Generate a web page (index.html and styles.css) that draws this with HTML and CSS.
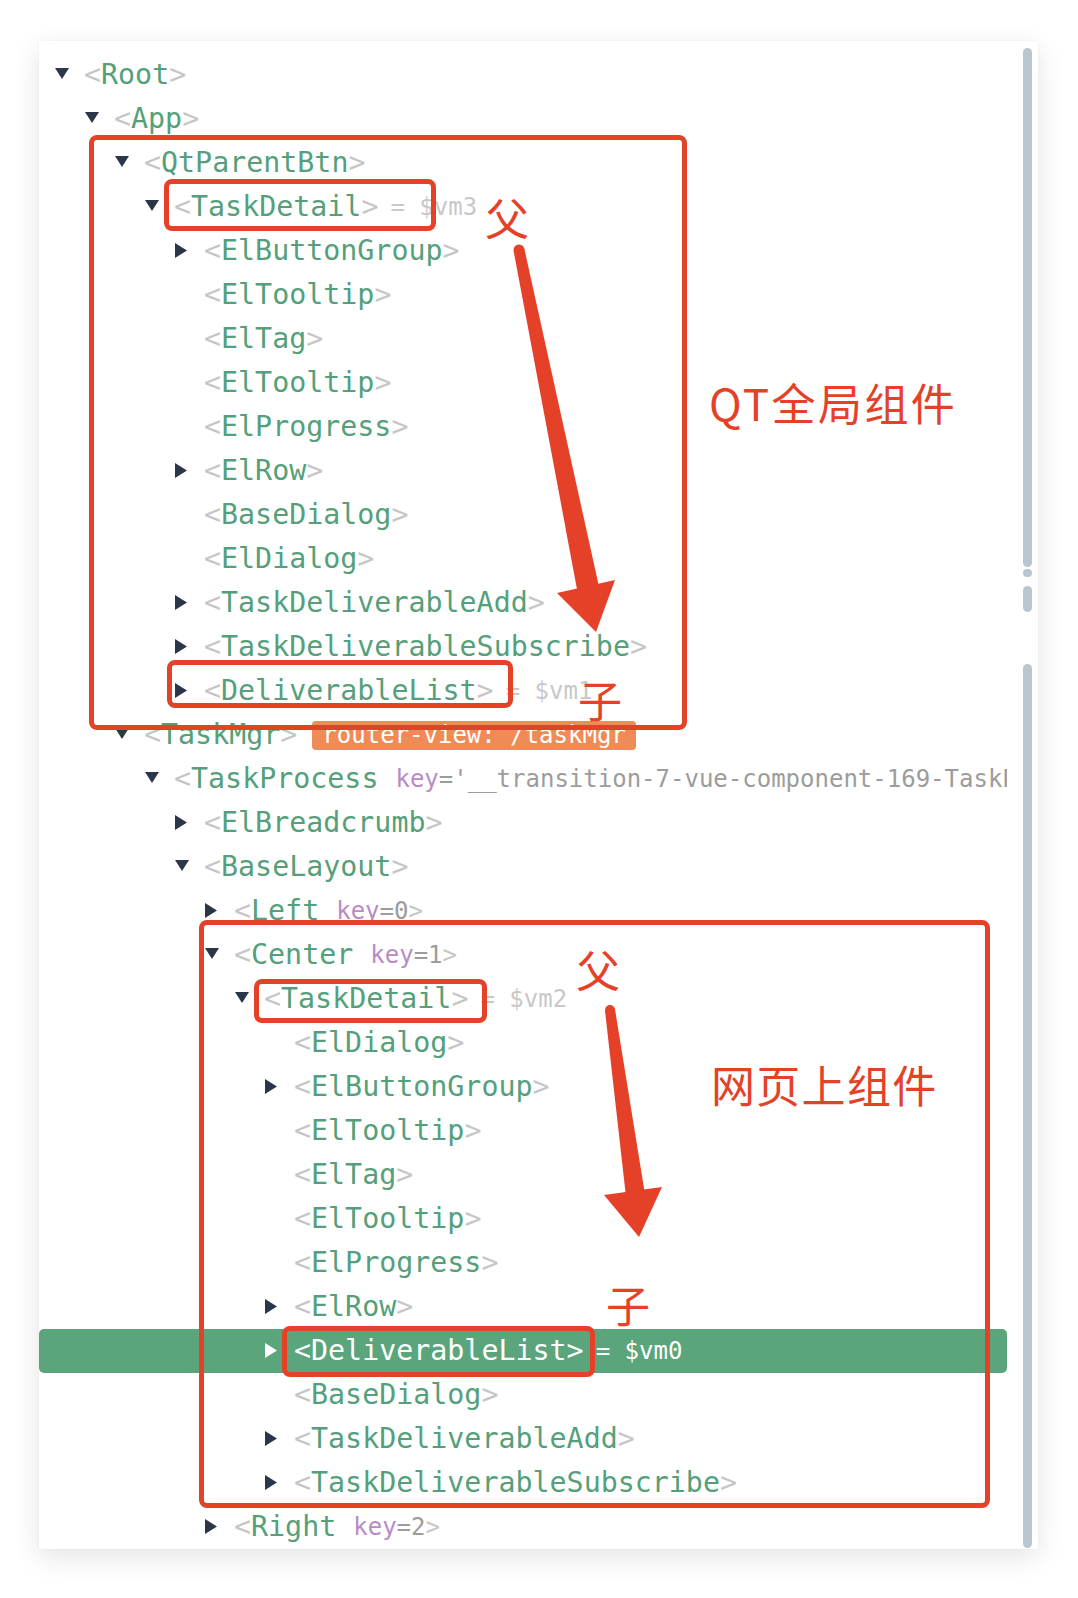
FILE: index.html
```html
<!DOCTYPE html>
<html>
<head>
<meta charset="utf-8">
<link rel="stylesheet" href="styles.css">
</head>
<body>
<div class="page">
  <div class="card">
    <div class="tree">
      <div class="row d0"><span class="tog"><svg class="dn" width="14" height="11"><polygon points="0,0 14,0 7,11"/></svg></span><span class="br">&lt;</span><span class="nm">Root</span><span class="br">&gt;</span></div>
      <div class="row d1"><span class="tog"><svg class="dn" width="14" height="11"><polygon points="0,0 14,0 7,11"/></svg></span><span class="br">&lt;</span><span class="nm">App</span><span class="br">&gt;</span></div>
      <div class="row d2"><span class="tog"><svg class="dn" width="14" height="11"><polygon points="0,0 14,0 7,11"/></svg></span><span class="br">&lt;</span><span class="nm">QtParentBtn</span><span class="br">&gt;</span></div>
      <div class="row d3"><span class="tog"><svg class="dn" width="14" height="11"><polygon points="0,0 14,0 7,11"/></svg></span><span class="br">&lt;</span><span class="nm">TaskDetail</span><span class="br">&gt;</span><span class="vm">= $vm3</span></div>
      <div class="row d4"><span class="tog"><svg class="rt" width="12" height="15"><polygon points="0,0 12,7.5 0,15"/></svg></span><span class="br">&lt;</span><span class="nm">ElButtonGroup</span><span class="br">&gt;</span></div>
      <div class="row d4"><span class="tog"></span><span class="br">&lt;</span><span class="nm">ElTooltip</span><span class="br">&gt;</span></div>
      <div class="row d4"><span class="tog"></span><span class="br">&lt;</span><span class="nm">ElTag</span><span class="br">&gt;</span></div>
      <div class="row d4"><span class="tog"></span><span class="br">&lt;</span><span class="nm">ElTooltip</span><span class="br">&gt;</span></div>
      <div class="row d4"><span class="tog"></span><span class="br">&lt;</span><span class="nm">ElProgress</span><span class="br">&gt;</span></div>
      <div class="row d4"><span class="tog"><svg class="rt" width="12" height="15"><polygon points="0,0 12,7.5 0,15"/></svg></span><span class="br">&lt;</span><span class="nm">ElRow</span><span class="br">&gt;</span></div>
      <div class="row d4"><span class="tog"></span><span class="br">&lt;</span><span class="nm">BaseDialog</span><span class="br">&gt;</span></div>
      <div class="row d4"><span class="tog"></span><span class="br">&lt;</span><span class="nm">ElDialog</span><span class="br">&gt;</span></div>
      <div class="row d4"><span class="tog"><svg class="rt" width="12" height="15"><polygon points="0,0 12,7.5 0,15"/></svg></span><span class="br">&lt;</span><span class="nm">TaskDeliverableAdd</span><span class="br">&gt;</span></div>
      <div class="row d4"><span class="tog"><svg class="rt" width="12" height="15"><polygon points="0,0 12,7.5 0,15"/></svg></span><span class="br">&lt;</span><span class="nm">TaskDeliverableSubscribe</span><span class="br">&gt;</span></div>
      <div class="row d4"><span class="tog"><svg class="rt" width="12" height="15"><polygon points="0,0 12,7.5 0,15"/></svg></span><span class="br">&lt;</span><span class="nm">DeliverableList</span><span class="br">&gt;</span><span class="vm">= $vm1</span></div>
      <div class="row d2"><span class="tog"><svg class="dn" width="14" height="11"><polygon points="0,0 14,0 7,11"/></svg></span><span class="br">&lt;</span><span class="nm">TaskMgr</span><span class="br">&gt;</span><span class="badge">router-view: /taskMgr</span></div>
      <div class="row d3"><span class="tog"><svg class="dn" width="14" height="11"><polygon points="0,0 14,0 7,11"/></svg></span><span class="br">&lt;</span><span class="nm">TaskProcess</span><span class="attr"><span class="ak">key</span><span class="av">='__transition-7-vue-component-169-TaskProcess'</span><span class="br">&gt;</span></span></div>
      <div class="row d4"><span class="tog"><svg class="rt" width="12" height="15"><polygon points="0,0 12,7.5 0,15"/></svg></span><span class="br">&lt;</span><span class="nm">ElBreadcrumb</span><span class="br">&gt;</span></div>
      <div class="row d4"><span class="tog"><svg class="dn" width="14" height="11"><polygon points="0,0 14,0 7,11"/></svg></span><span class="br">&lt;</span><span class="nm">BaseLayout</span><span class="br">&gt;</span></div>
      <div class="row d5"><span class="tog"><svg class="rt" width="12" height="15"><polygon points="0,0 12,7.5 0,15"/></svg></span><span class="br">&lt;</span><span class="nm">Left</span><span class="attr"><span class="ak">key</span><span class="av">=0</span><span class="br">&gt;</span></span></div>
      <div class="row d5"><span class="tog"><svg class="dn" width="14" height="11"><polygon points="0,0 14,0 7,11"/></svg></span><span class="br">&lt;</span><span class="nm">Center</span><span class="attr"><span class="ak">key</span><span class="av">=1</span><span class="br">&gt;</span></span></div>
      <div class="row d6"><span class="tog"><svg class="dn" width="14" height="11"><polygon points="0,0 14,0 7,11"/></svg></span><span class="br">&lt;</span><span class="nm">TaskDetail</span><span class="br">&gt;</span><span class="vm">= $vm2</span></div>
      <div class="row d7"><span class="tog"></span><span class="br">&lt;</span><span class="nm">ElDialog</span><span class="br">&gt;</span></div>
      <div class="row d7"><span class="tog"><svg class="rt" width="12" height="15"><polygon points="0,0 12,7.5 0,15"/></svg></span><span class="br">&lt;</span><span class="nm">ElButtonGroup</span><span class="br">&gt;</span></div>
      <div class="row d7"><span class="tog"></span><span class="br">&lt;</span><span class="nm">ElTooltip</span><span class="br">&gt;</span></div>
      <div class="row d7"><span class="tog"></span><span class="br">&lt;</span><span class="nm">ElTag</span><span class="br">&gt;</span></div>
      <div class="row d7"><span class="tog"></span><span class="br">&lt;</span><span class="nm">ElTooltip</span><span class="br">&gt;</span></div>
      <div class="row d7"><span class="tog"></span><span class="br">&lt;</span><span class="nm">ElProgress</span><span class="br">&gt;</span></div>
      <div class="row d7"><span class="tog"><svg class="rt" width="12" height="15"><polygon points="0,0 12,7.5 0,15"/></svg></span><span class="br">&lt;</span><span class="nm">ElRow</span><span class="br">&gt;</span></div>
      <div class="row d7 sel"><span class="tog"><svg class="rt" width="12" height="15"><polygon points="0,0 12,7.5 0,15"/></svg></span><span class="br">&lt;</span><span class="nm">DeliverableList</span><span class="br">&gt;</span><span class="vm">= $vm0</span></div>
      <div class="row d7"><span class="tog"></span><span class="br">&lt;</span><span class="nm">BaseDialog</span><span class="br">&gt;</span></div>
      <div class="row d7"><span class="tog"><svg class="rt" width="12" height="15"><polygon points="0,0 12,7.5 0,15"/></svg></span><span class="br">&lt;</span><span class="nm">TaskDeliverableAdd</span><span class="br">&gt;</span></div>
      <div class="row d7"><span class="tog"><svg class="rt" width="12" height="15"><polygon points="0,0 12,7.5 0,15"/></svg></span><span class="br">&lt;</span><span class="nm">TaskDeliverableSubscribe</span><span class="br">&gt;</span></div>
      <div class="row d5"><span class="tog"><svg class="rt" width="12" height="15"><polygon points="0,0 12,7.5 0,15"/></svg></span><span class="br">&lt;</span><span class="nm">Right</span><span class="attr"><span class="ak">key</span><span class="av">=2</span><span class="br">&gt;</span></span></div>
    </div>
    <div class="gutter">
      <div class="thumb t1"></div>
      <div class="thumb t1b"></div>
      <div class="thumb t2"></div>
      <div class="thumb t3"></div>
    </div>
  </div>

  <div class="box b1"></div>
  <div class="box b2"></div>
  <div class="box b3"></div>
  <div class="box b4"></div>
  <div class="box b5"></div>
  <div class="box b6"></div>

  <div class="note n-fu1">父</div>
  <div class="note n-zi1">子</div>
  <div class="note n-qt">QT全局组件</div>
  <div class="note n-fu2">父</div>
  <div class="note n-web">网页上组件</div>
  <div class="note n-zi2">子</div>

  <svg class="arrows" width="1078" height="1598" viewBox="0 0 1078 1598">
    <circle cx="519" cy="250" r="5.5"/>
    <polygon points="513.6,251 524.4,249 598.8,585.8 577.2,590.2"/>
    <polygon points="557,593 615,580 596,632"/>
    <circle cx="610" cy="1010" r="5"/>
    <polygon points="605,1010.7 615,1009.3 644.4,1190.7 625.6,1193.3"/>
    <polygon points="604,1195 662,1187 639,1237"/>
  </svg>
</div>
</body>
</html>
```

FILE: styles.css
```css
html, body {
  margin: 0;
  padding: 0;
  background: #ffffff;
}

.page {
  position: relative;
  width: 1078px;
  height: 1598px;
  overflow: hidden;
  padding-top: 41px;
  box-sizing: border-box;
}

.card {
  margin-left: 39px;
  width: 999px;
  background: #ffffff;
  display: flex;
  box-shadow: 0 0 2px rgba(0, 0, 0, 0.06), 0 8px 26px rgba(0, 0, 0, 0.11);
}

.tree {
  width: 968px;
  padding-top: 12px;
  overflow: hidden;
  font-family: "DejaVu Sans Mono", "Liberation Mono", monospace;
  font-size: 28.3px;
  white-space: nowrap;
}

.row {
  height: 44px;
  line-height: 44px;
  display: flex;
  align-items: center;
  box-sizing: border-box;
  border-radius: 5px;
}

.d0 { padding-left: 16px; }
.d1 { padding-left: 46px; }
.d2 { padding-left: 76px; }
.d3 { padding-left: 106px; }
.d4 { padding-left: 136px; }
.d5 { padding-left: 166px; }
.d6 { padding-left: 196px; }
.d7 { padding-left: 226px; }

.tog {
  width: 29px;
  flex: none;
  height: 44px;
  display: flex;
  align-items: center;
}

.tog svg { display: block; fill: #2b3648; }
.tog .dn { margin-top: -3px; }
.tog .rt { margin-top: -2px; }

.br { color: #c6c6c6; }
.nm { color: #55a07a; }

.vm {
  margin-left: 12px;
  font-size: 24px;
  color: #c8c8c8;
}

.attr {
  margin-left: 17px;
  font-size: 24px;
}
.ak { color: #b98bc6; }
.av { color: #9c9c9c; }

.badge {
  margin-left: 15px;
  font-size: 24px;
  line-height: 29px;
  height: 29px;
  padding: 0 10px;
  border-radius: 4px;
  background: #ef8b57;
  color: #ffffff;
}

.sel { background: #5aa57b; }
.sel .br, .sel .nm, .sel .vm { color: #ffffff; }
.sel .tog svg { fill: #ffffff; }

.gutter {
  width: 31px;
  position: relative;
}

.thumb {
  position: absolute;
  left: 16px;
  width: 9px;
  border-radius: 5px;
  background: #b9c6cf;
}
.t1 { top: 7px; height: 519px; }
.t1b { top: 528px; height: 8px; }
.t2 { top: 545px; height: 26px; }
.t3 { top: 623px; height: 884px; }

.box {
  position: absolute;
  box-sizing: border-box;
  border: 5px solid #e44128;
  border-radius: 8px;
}
.b1 { left: 89px; top: 135px; width: 598px; height: 595px; }
.b2 { left: 164px; top: 179px; width: 272px; height: 52px; }
.b3 { left: 167px; top: 660px; width: 346px; height: 48px; }
.b4 { left: 199px; top: 920px; width: 791px; height: 588px; }
.b5 { left: 254px; top: 979px; width: 233px; height: 44px; }
.b6 { left: 282px; top: 1326px; width: 313px; height: 51px; }

.note {
  position: absolute;
  font-family: "Noto Sans CJK SC", "Noto Sans", sans-serif;
  font-size: 44px;
  line-height: 1;
  color: #e44128;
  white-space: nowrap;
}
.n-fu1 { left: 485px; top: 195px; }
.n-zi1 { left: 578px; top: 677px; }
.n-qt { left: 709px; top: 380px; letter-spacing: 2.4px; }
.n-fu2 { left: 576px; top: 947px; }
.n-web { left: 711px; top: 1062px; letter-spacing: 1.3px; }
.n-zi2 { left: 606px; top: 1282px; }

.arrows {
  position: absolute;
  left: 0;
  top: 0;
  fill: #e44128;
}
```
